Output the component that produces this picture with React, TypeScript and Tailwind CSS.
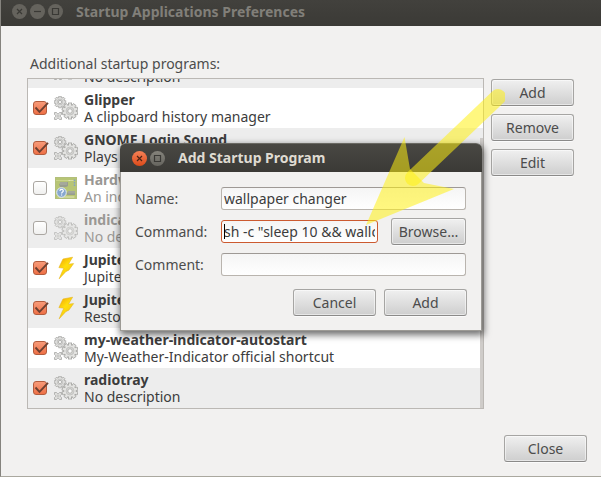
import { useState } from 'react';
import type { ButtonHTMLAttributes, InputHTMLAttributes } from 'react';
import clsx from 'clsx';

type IconName = 'gears' | 'board' | 'bolt';

interface Program {
  id: number;
  name: string;
  description: string;
  icon: IconName;
  enabled: boolean;
}

const initialPrograms: Program[] = [
  { id: 1, name: 'Glipper', description: 'A clipboard history manager', icon: 'gears', enabled: true },
  { id: 2, name: 'GNOME Login Sound', description: 'Plays a sound', icon: 'gears', enabled: true },
  { id: 3, name: 'Hardware', description: 'An indicator', icon: 'board', enabled: false },
  { id: 4, name: 'indicator', description: 'No description', icon: 'gears', enabled: false },
  { id: 5, name: 'Jupiter', description: 'Jupiter', icon: 'bolt', enabled: true },
  { id: 6, name: 'Jupiter', description: 'Restore', icon: 'bolt', enabled: true },
  { id: 7, name: 'my-weather-indicator-autostart', description: 'My-Weather-Indicator official shortcut', icon: 'gears', enabled: true },
  { id: 8, name: 'radiotray', description: 'No description', icon: 'gears', enabled: true },
];

function Gear({ cx, cy, r, hole, teeth }: { cx: number; cy: number; r: number; hole: number; teeth: number[] }) {
  return (
    <g transform={`translate(${cx} ${cy})`}>
      <g fill="#e4e4e2" stroke="#a3a3a1" strokeWidth="0.8">
        {teeth.map((a) => (
          <rect key={a} x={-r * 0.2} y={-r} width={r * 0.4} height={r * 2} transform={`rotate(${a})`} />
        ))}
        <circle r={r * 0.78} />
      </g>
      {teeth.map((a) => (
        <rect key={a} x={-r * 0.13} y={-r * 0.9} width={r * 0.26} height={r * 1.8} fill="#e4e4e2" transform={`rotate(${a})`} />
      ))}
      <circle r={r * 0.5} fill="#d6d6d4" stroke="#bcbcba" strokeWidth="0.7" />
      <circle r={hole} fill="#fafafa" stroke="#a0a09e" strokeWidth="0.7" />
    </g>
  );
}

function ProgramIcon({ name }: { name: IconName }) {
  if (name === 'board') {
    return (
      <svg viewBox="0 0 24 24" className="size-6 shrink-0" aria-hidden="true">
        <rect x="1.5" y="1.5" width="21" height="21" fill="#9aad3c" stroke="#94a544" />
        <path d="M2 4.5h19M3 21h18" stroke="#b4c25c" />
        <path d="M5 8.5 7 6h7v4l-2 1H6z" fill="#6f7660" />
        <path d="M6 6h7v3H6z" fill="#7f8572" />
        <path d="M14.5 4.5h4" stroke="#d6dd96" strokeDasharray="2 1" />
        <path d="M20.5 3.5v7" stroke="#4a78b4" strokeWidth="1.4" strokeDasharray="1.5 1" />
        <path d="M12 16.5h2V15h7v4h-8z" fill="#6c7460" />
        <path d="M14 15h7v2.5h-7z" fill="#7f8572" />
        <path d="M5 21h15" stroke="#ccd58c" />
        <circle cx="7.5" cy="16.5" r="4.8" fill="#5382bb" stroke="#d8e3ee" />
        <path d="M5.9 15.1c0-2.2 3.4-2.1 3.4-.2 0 1.2-1.7 1.2-1.7 2.6M7.6 18.5v1.1" fill="none" stroke="#fff" strokeWidth="1.2" />
      </svg>
    );
  }
  if (name === 'bolt') {
    return (
      <svg viewBox="0 0 24 24" className="size-6 shrink-0" aria-hidden="true">
        <defs>
          <linearGradient id="bolt" x1="0" y1="0" x2="0.6" y2="1">
            <stop offset="0" stopColor="#f2a006" />
            <stop offset="0.5" stopColor="#ffdf0c" />
            <stop offset="1" stopColor="#f4c410" />
          </linearGradient>
        </defs>
        <path
          d="M9 3 18.6 1.2 14.4 8.2l5.2-.6-4.8 6.6-2.8 1.2-6.8 7.4 2.9-7 1.8-3.6-5-.6z"
          fill="url(#bolt)"
          stroke="#e6b31c"
          strokeWidth="0.6"
          strokeLinejoin="round"
        />
      </svg>
    );
  }
  return (
    <svg viewBox="0 0 24 24" className="size-6 shrink-0" aria-hidden="true">
      <Gear cx={6} cy={6} r={5.8} hole={1.6} teeth={[0, 45, 90, 135]} />
      <Gear cx={16} cy={15} r={8} hole={2.2} teeth={[0, 36, 72, 108, 144]} />
      <path
        d="M.5 16.5h2l1 1h1l1-1h2v2l-1 1v1l1 1v2h-2l-1-1h-1l-1 1h-2v-2l1-1v-1l-1-1z"
        fill="#dededc"
        stroke="#a6a6a4"
        strokeWidth="0.8"
      />
      <circle cx="4" cy="20" r="1" fill="#f4f4f4" stroke="#a6a6a4" strokeWidth="0.6" />
    </svg>
  );
}

function ProgramRow({ program, onToggle }: { program: Program; onToggle: () => void }) {
  return (
    <li className="shrink-0 odd:bg-[#ededed] even:bg-white">
      <label
        className={clsx(
          'flex h-10 items-center gap-1.5 pl-[5px] leading-[17px]',
          program.enabled ? 'text-[#3c3c3c]' : 'text-[#9a9894]',
        )}
      >
        <span className="relative flex size-[15px] shrink-0">
          <input
            type="checkbox"
            checked={program.enabled}
            onChange={onToggle}
            className="size-[14px] appearance-none rounded-[3px] border border-[#aaa6a1] bg-linear-to-b from-white to-[#f0f0ef] checked:border-[#b35c3d] checked:from-[#f79a78] checked:to-[#ee7046]"
          />
          {program.enabled && (
            <svg viewBox="0 0 16 16" className="pointer-events-none absolute inset-0 size-4" aria-hidden="true">
              <path d="M2.5 6.5 6.5 10.8 15 1.8" fill="none" stroke="#6e4030" strokeWidth="1.9" />
            </svg>
          )}
        </span>
        <span className={clsx('flex', !program.enabled && 'opacity-70')}>
          <ProgramIcon name={program.icon} />
        </span>
        <span className="min-w-0 whitespace-nowrap">
          <span className="block min-h-[17px] font-bold">{program.name}</span>
          <span className="block">{program.description}</span>
        </span>
      </label>
    </li>
  );
}

function Button({ className, ...props }: ButtonHTMLAttributes<HTMLButtonElement>) {
  return (
    <button
      type="button"
      className={clsx(
        'flex h-[27px] items-center justify-center rounded-[3px] border border-[#a6a5a3] border-b-[#8b8a89] bg-linear-to-b from-[#f0f0f0] to-[#cecece] text-[#4c4c4c] shadow-[inset_0_0_0_1px_#ffffff80,0_1px_0_#ffffffb0]',
        className ?? 'w-[83px]',
      )}
      {...props}
    />
  );
}

function TextField({ className, ...props }: InputHTMLAttributes<HTMLInputElement>) {
  return (
    <input
      type="text"
      className={clsx(
        'h-[23px] w-full min-w-0 rounded-[3px] border bg-linear-to-b from-[#f5f5f5] to-white px-[2px] text-[#3c3c3c] outline-none',
        className ?? 'border-[#b9b4ae] border-t-[#9e9995]',
      )}
      {...props}
    />
  );
}

function WindowButton({ kind, active }: { kind: 'close' | 'minimize' | 'maximize'; active?: boolean }) {
  return (
    <button
      type="button"
      aria-label={kind}
      className={clsx(
        'size-[15px] rounded-full',
        active && kind === 'close'
          ? 'bg-linear-to-b from-[#f58055] to-[#dc4a16] text-[#4d2516]'
          : active
            ? 'bg-linear-to-b from-[#85837b] to-[#66655f] text-[#3a3935]'
            : 'bg-[#65635d] text-[#3a3935]',
      )}
    >
      <svg viewBox="0 0 15 15" className="size-[15px]" fill="none" stroke="currentColor" strokeWidth="1.2" aria-hidden="true">
        {kind === 'close' && <path d="m5 5 5 5m0-5-5 5" />}
        {kind === 'minimize' && <path d="M4 7.5h7" />}
        {kind === 'maximize' && <path d="M4.5 4.5h6v6h-6z" />}
      </svg>
    </button>
  );
}

function AddProgramDialog() {
  const [name, setName] = useState('wallpaper changer');
  const [command, setCommand] = useState('sh -c "sleep 10 && wallc');
  const [comment, setComment] = useState('');

  return (
    <section
      role="dialog"
      aria-labelledby="dialog-title"
      className="absolute top-[143px] left-[119px] w-[362px] rounded-t-md bg-[#f2f1f0] shadow-[1px_3px_7px_1px_#00000090]"
    >
      <header className="flex h-[29px] items-center gap-[3px] rounded-t-md border-t border-[#6a6963] bg-linear-to-b from-[#494843] to-[#3b3a36] pl-3">
        <WindowButton kind="close" active />
        <WindowButton kind="maximize" active />
        <h2 id="dialog-title" className="pl-2.5 font-bold text-[#dfdbd2]">
          Add Startup Program
        </h2>
      </header>
      <form className="border border-t-0 border-[#9c9a95] px-3.5 pt-[15px] pb-3.5" onSubmit={(e) => e.preventDefault()}>
        <div className="grid grid-cols-[78px_1fr] items-center gap-x-2 gap-y-2 pr-px">
          <label htmlFor="name">Name:</label>
          <TextField id="name" value={name} onChange={(e) => setName(e.target.value)} />
          <label htmlFor="command">Command:</label>
          <div className="flex items-center gap-[13px]">
            <div className="relative flex min-w-0 flex-1">
              <TextField
                id="command"
                value={command}
                onChange={(e) => setCommand(e.target.value)}
                className="border-[#cc5a30]"
              />
              {/* text cursor */}
              <span className="absolute inset-y-1 left-[3px] w-px bg-black" />
            </div>
            <Button className="w-[75px]">Browse…</Button>
          </div>
          <label htmlFor="comment">Comment:</label>
          <TextField id="comment" value={comment} onChange={(e) => setComment(e.target.value)} />
        </div>
        <div className="mt-[13px] flex justify-end gap-2">
          <Button>Cancel</Button>
          <Button type="submit">Add</Button>
        </div>
      </form>
    </section>
  );
}

function Arrow() {
  return (
    <svg
      viewBox="0 0 140 140"
      className="pointer-events-none absolute top-[87px] left-[364px] size-[140px]"
      aria-hidden="true"
    >
      <path d="M133 10 48 91" stroke="#fff112" strokeOpacity="0.54" strokeWidth="16" strokeLinecap="round" />
      <path d="M39.5 50 45 82 59 96l30 6L1 138z" fill="#fff112" fillOpacity="0.54" />
    </svg>
  );
}

export default function App() {
  const [programs, setPrograms] = useState(initialPrograms);

  const toggle = (id: number) =>
    setPrograms((list) => list.map((p) => (p.id === id ? { ...p, enabled: !p.enabled } : p)));

  return (
    <div className="relative flex min-h-screen flex-col overflow-hidden border-b border-l border-b-[#aaa89f] border-l-[#85837e] bg-[#f2f1f0] font-['Noto_Sans',sans-serif] text-sm text-[#4c4c4c]">
      <header className="flex h-[26px] items-center gap-[3px] bg-linear-to-b from-[#42413d] to-[#3b3a36] pr-3 pb-[3px] pl-[11px]">
        <WindowButton kind="close" />
        <WindowButton kind="minimize" />
        <WindowButton kind="maximize" />
        <h1 className="pl-2.5 font-bold text-[#817f79]">Startup Applications Preferences</h1>
      </header>

      <main className="flex flex-1 flex-col pt-7">
        <h2 className="pb-1 pl-[29px]">Additional startup programs:</h2>
        <div className="flex gap-[7px] pr-[27px] pl-[26px]">
          <div className="relative min-w-0 flex-1 border border-[#bbb8b4]">
            {/* scrolled to the end, so the first row is cut off at the top */}
            <ul className="flex h-[329px] flex-col justify-end overflow-hidden">
              <ProgramRow
                program={{ id: 0, name: '', description: 'No description', icon: 'gears', enabled: true }}
                onToggle={() => {}}
              />
              {programs.map((program) => (
                <ProgramRow key={program.id} program={program} onToggle={() => toggle(program.id)} />
              ))}
            </ul>
            <div className="absolute top-[59px] right-0 bottom-0 w-[3px] bg-[#cfccc9]" />
          </div>
          <div className="flex flex-col gap-2 pt-px">
            <Button>Add</Button>
            <Button>Remove</Button>
            <Button>Edit</Button>
          </div>
        </div>
        <footer className="mt-auto flex justify-end pr-3.5 pb-3.5">
          <Button>Close</Button>
        </footer>
      </main>

      <AddProgramDialog />
      <Arrow />
    </div>
  );
}
